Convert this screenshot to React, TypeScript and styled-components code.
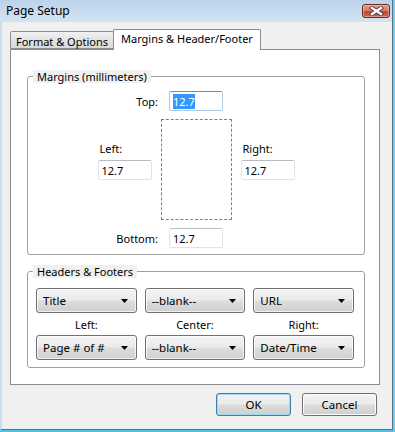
import React from 'react';
import styled, { createGlobalStyle } from 'styled-components';

const GlobalStyle = createGlobalStyle`
  html, body {
    margin: 0;
    padding: 0;
    background: #ffffff;
  }

  body {
    font-family: 'Noto Sans', 'Open Sans', sans-serif;
    font-size: 11px;
    color: #000000;
  }
`;

const Window = styled.div`
  width: 395px;
  height: 432px;
  box-sizing: border-box;
  display: flex;
  flex-direction: column;
  border-right: 2px solid #74cfef;
  border-bottom: 2px solid #4fc3ec;
  background: #c7dbef;
`;

const TitleBar = styled.div`
  height: 22px;
  flex: none;
  display: flex;
  align-items: center;
  justify-content: space-between;
  padding: 0 2px 0 6px;
  background: linear-gradient(#bcd3ea, #d3e3f3);
  border-right: 1px solid #5d6e80;
`;

const Title = styled.span`
  font-size: 12px;
  line-height: 16px;
`;

const CloseButton = styled.div`
  width: 28px;
  height: 14px;
  margin-top: -1px;
  box-sizing: border-box;
  display: flex;
  align-items: center;
  justify-content: center;
  border: 1px solid #6b2a20;
  border-radius: 3px;
  background: linear-gradient(#e3a090 0%, #d57a69 45%, #c4452f 55%, #d0634e 100%);
  box-shadow: inset 0 0 0 1px rgba(255, 205, 195, 0.5);
`;

const Body = styled.div`
  flex: 1;
  display: flex;
  flex-direction: column;
  padding: 7px 12px 0 8px;
  background: #f0f0f0;
  border-left: 2px solid #cadcef;
  border-right: 1px solid #5d6e80;
  border-bottom: 1px solid #5d6e80;
`;

const TabStrip = styled.div`
  display: flex;
  align-items: flex-end;
  height: 20px;
`;

const Tab = styled.div<{ $active?: boolean }>`
  position: relative;
  z-index: ${(p) => (p.$active ? 2 : 1)};
  box-sizing: border-box;
  height: ${(p) => (p.$active ? '21px' : '18px')};
  margin-bottom: ${(p) => (p.$active ? '-1px' : '0')};
  margin-left: ${(p) => (p.$active ? '-1px' : '0')};
  padding: ${(p) => (p.$active ? '1px 7px 0 7px' : '2px 5px 0 5px')};
  line-height: 16px;
  white-space: nowrap;
  border: 1px solid #898c95;
  border-bottom: ${(p) => (p.$active ? 'none' : '1px solid #898c95')};
  border-radius: 2px 2px 0 0;
  background: ${(p) => (p.$active ? '#ffffff' : 'linear-gradient(#f2f2f2, #e3e3e3 50%, #d9d9d9)')};
`;

const Panel = styled.div`
  height: 336px;
  box-sizing: border-box;
  display: flex;
  flex-direction: column;
  gap: 10px;
  padding: 20px 14px 0 16px;
  background: #ffffff;
  border: 1px solid #898c95;
`;

const GroupBox = styled.fieldset<{ $padTop: number; $padBottom: number }>`
  margin: 0;
  min-width: 0;
  padding: ${(p) => `${p.$padTop}px 0 ${p.$padBottom}px`};
  border: 1px solid #a0a0a0;
  border-radius: 3px;
`;

const Legend = styled.legend`
  margin-left: 5px;
  padding: 0 4px;
  line-height: 13px;
  background: #f0f0f0;
`;

const MarginsLayout = styled.div`
  display: flex;
  flex-direction: column;
  gap: 8px;
`;

const EdgeRow = styled.div`
  display: grid;
  grid-template-columns: 1fr 54px 1fr;
  align-items: center;
`;

const SideRow = styled.div`
  display: grid;
  grid-template-columns: 1fr 71px 1fr;
  column-gap: 9px;
  height: 101px;
`;

const RowLabel = styled.span`
  justify-self: end;
  margin-right: 11px;
  line-height: 15px;
`;

const SideBlock = styled.div<{ $side: 'left' | 'right' }>`
  justify-self: ${(p) => (p.$side === 'left' ? 'end' : 'start')};
  display: flex;
  flex-direction: column;
  gap: 4px;
  padding-top: 22px;
`;

const SideLabel = styled.span`
  padding-left: 2px;
  line-height: 15px;
`;

const TextBox = styled.div<{ $focused?: boolean }>`
  width: 54px;
  height: 20px;
  box-sizing: border-box;
  display: flex;
  align-items: center;
  padding: 0 3px;
  background: #ffffff;
  border: 1px solid ${(p) => (p.$focused ? '#a9cbe8' : '#e2e3ea')};
  border-top-color: ${(p) => (p.$focused ? '#5c93c7' : '#b9bcc4')};
  border-radius: 2px;
`;

const Selected = styled.span`
  background: #3399ff;
  color: #ffffff;
  line-height: 15px;
`;

const PagePreview = styled.div`
  box-sizing: border-box;
  border: 1px dashed #7f7f7f;
`;

const HeaderGrid = styled.div`
  display: grid;
  grid-template-columns: repeat(3, 1fr);
  grid-template-rows: 25px 22px 25px;
  column-gap: 8px;
  padding: 0 10px 0 8px;
`;

const ColumnLabel = styled.span`
  align-self: center;
  text-align: center;
  line-height: 15px;
`;

const Combo = styled.div`
  display: flex;
  align-items: center;
  justify-content: space-between;
  box-sizing: border-box;
  padding: 0 8px 0 6px;
  border: 1px solid #707070;
  border-radius: 3px;
  background: linear-gradient(#f3f3f3 0%, #ebebeb 48%, #dddddd 52%, #cfcfcf 100%);
  box-shadow: inset 0 0 0 1px rgba(255, 255, 255, 0.7);
  line-height: 15px;
  font-size: 11.5px;
`;

const Buttons = styled.div`
  display: flex;
  justify-content: flex-end;
  gap: 11px;
  margin: 8px 3px 0 0;
`;

const Button = styled.div<{ $default?: boolean }>`
  width: 75px;
  height: 23px;
  box-sizing: border-box;
  display: flex;
  align-items: center;
  justify-content: center;
  line-height: 15px;
  font-size: 11.5px;
  border: 1px solid ${(p) => (p.$default ? '#3c7fb1' : '#707070')};
  border-radius: 3px;
  background: linear-gradient(#f2f2f2 0%, #ebebeb 48%, #dddddd 52%, #cfcfcf 100%);
  box-shadow: inset 0 0 0 1px ${(p) => (p.$default ? '#9ed8f3' : '#fcfcfc')};
`;

const Arrow = () => (
  <svg width='7' height='4' viewBox='0 0 7 4'>
    <polygon points='0,0 7,0 3.5,4' fill='#000000' />
  </svg>
);

const CloseGlyph = () => (
  <svg width='15' height='10' viewBox='0 0 15 10'>
    <path d='M3 2 L12 8 M12 2 L3 8' stroke='#5a3a35' strokeWidth='4.2' strokeLinecap='square' />
    <path d='M3 2 L12 8 M12 2 L3 8' stroke='#ffffff' strokeWidth='2.4' strokeLinecap='square' />
  </svg>
);

const headerRows = [
  { left: 'Title', center: '--blank--', right: 'URL' },
  { left: 'Page # of #', center: '--blank--', right: 'Date/Time' }
];

const ComboBox = ({ value }: { value: string }) => (
  <Combo>
    <span>{value}</span>
    <Arrow />
  </Combo>
);

export default function App () {
  return (
    <>
      <GlobalStyle />
      <Window>
        <TitleBar>
          <Title>Page Setup</Title>
          <CloseButton>
            <CloseGlyph />
          </CloseButton>
        </TitleBar>
        <Body>
          <TabStrip>
            <Tab>Format &amp; Options</Tab>
            <Tab $active>Margins &amp; Header/Footer</Tab>
          </TabStrip>
          <Panel>
            <GroupBox $padTop={8} $padBottom={6}>
              <Legend>Margins (millimeters)</Legend>
              <MarginsLayout>
                <EdgeRow>
                  <RowLabel>Top:</RowLabel>
                  <TextBox $focused>
                    <Selected>12.7</Selected>
                  </TextBox>
                </EdgeRow>
                <SideRow>
                  <SideBlock $side='left'>
                    <SideLabel>Left:</SideLabel>
                    <TextBox>12.7</TextBox>
                  </SideBlock>
                  <PagePreview />
                  <SideBlock $side='right'>
                    <SideLabel>Right:</SideLabel>
                    <TextBox>12.7</TextBox>
                  </SideBlock>
                </SideRow>
                <EdgeRow>
                  <RowLabel>Bottom:</RowLabel>
                  <TextBox>12.7</TextBox>
                </EdgeRow>
              </MarginsLayout>
            </GroupBox>
            <GroupBox $padTop={10} $padBottom={7}>
              <Legend>Headers &amp; Footers</Legend>
              <HeaderGrid>
                <ComboBox value={headerRows[0].left} />
                <ComboBox value={headerRows[0].center} />
                <ComboBox value={headerRows[0].right} />
                <ColumnLabel>Left:</ColumnLabel>
                <ColumnLabel>Center:</ColumnLabel>
                <ColumnLabel>Right:</ColumnLabel>
                <ComboBox value={headerRows[1].left} />
                <ComboBox value={headerRows[1].center} />
                <ComboBox value={headerRows[1].right} />
              </HeaderGrid>
            </GroupBox>
          </Panel>
          <Buttons>
            <Button $default>OK</Button>
            <Button>Cancel</Button>
          </Buttons>
        </Body>
      </Window>
    </>
  );
}
